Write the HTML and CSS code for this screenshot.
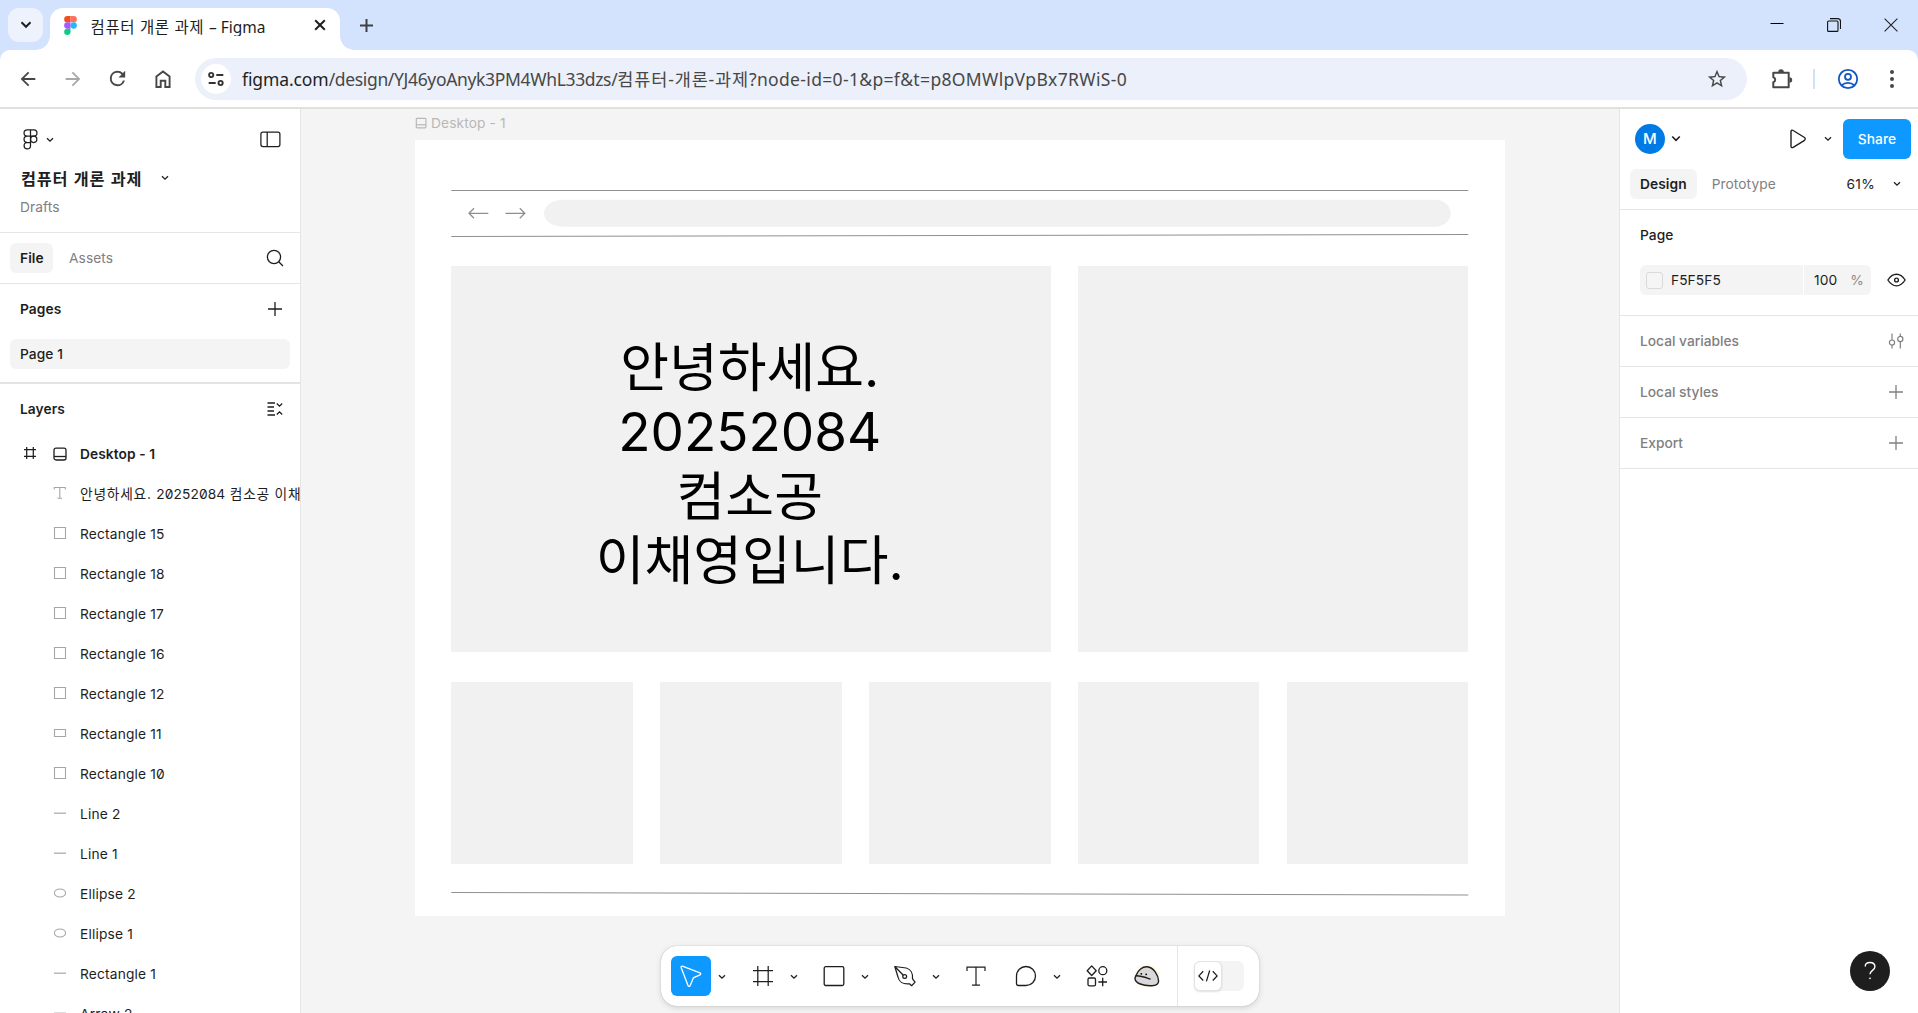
FILE: index.html
```html
<!DOCTYPE html>
<html lang="ko">
<head>
<meta charset="utf-8">
<title>컴퓨터 개론 과제 – Figma</title>
<link rel="stylesheet" href="styles.css">
</head>
<body>
<svg class="defs" width="0" height="0">
  <symbol id="chev" viewBox="0 0 8 6"><path d="M1 1.2 4 4.2 7 1.2" fill="none" stroke="currentColor" stroke-width="1.3"/></symbol>
  <symbol id="plus" viewBox="0 0 14 14"><path d="M7 0v14M0 7h14" fill="none" stroke="currentColor" stroke-width="1.3"/></symbol>
  <symbol id="rect" viewBox="0 0 16 16"><path d="M2.5 2.5h11v11h-11z" fill="none" stroke="currentColor" stroke-width="1.1"/></symbol>
  <symbol id="wide" viewBox="0 0 16 16"><path d="M2.5 4.5h11v7h-11z" fill="none" stroke="currentColor" stroke-width="1.1"/></symbol>
  <symbol id="line" viewBox="0 0 16 16"><path d="M2 8.2h12" fill="none" stroke="currentColor" stroke-width="1.2"/></symbol>
  <symbol id="ellipse" viewBox="0 0 16 16"><ellipse cx="8" cy="8" rx="5.6" ry="4" fill="none" stroke="currentColor" stroke-width="1.1"/></symbol>
</svg>

<header class="tabstrip">
  <button class="tab-search"><svg width="12" height="8" viewBox="0 0 12 8"><path d="M1.5 1.3 6 5.8l4.500-4.500" fill="none" stroke="#1f1f1f" stroke-width="2"/></svg></button>
  <div class="tab">
    <svg class="favicon" width="13" height="19" viewBox="0 0 38 57"><path fill="#1abcfe" d="M19 28.500a9.500 9.500 0 1 1 19 0 9.500 9.500 0 0 1-19 0z"/><path fill="#0acf83" d="M0 47.500A9.500 9.500 0 0 1 9.500 38H19v9.500a9.500 9.500 0 1 1-19 0z"/><path fill="#ff7262" d="M19 0v19h9.500a9.500 9.500 0 1 0 0-19H19z"/><path fill="#f24e1e" d="M0 9.500A9.500 9.500 0 0 0 9.500 19H19V0H9.500A9.500 9.500 0 0 0 0 9.500z"/><path fill="#a259ff" d="M0 28.500A9.500 9.500 0 0 0 9.500 38H19V19H9.500A9.500 9.500 0 0 0 0 28.500z"/></svg>
    <span class="tab-title">컴퓨터 개론 과제 <span class="latin">– Figma</span></span>
    <svg class="tab-close" width="12" height="12" viewBox="0 0 12 12"><path d="m1.200 1.200 9.600 9.600m0-9.600-9.600 9.600" stroke="#1f1f1f" stroke-width="2"/></svg>
  </div>
  <svg class="new-tab" width="13" height="13" viewBox="0 0 13 13"><path d="M6.500 0v13M0 6.500h13" stroke="#3c4043" stroke-width="2"/></svg>
  <div class="window-controls">
    <svg width="14" height="14" viewBox="0 0 14 14"><path d="M.5 5.500h13" stroke="#000"/></svg>
    <svg width="14" height="14" viewBox="0 0 14 14" fill="none" stroke="#111" stroke-width="1.100"><rect x=".6" y="3" width="10.400" height="10.400" rx="1"/><path d="M3 .6h7.500a3 3 0 0 1 3 3V11"/></svg>
    <svg width="14" height="14" viewBox="0 0 14 14"><path d="m.6.6 12.800 12.800m0-12.800L.6 13.400" stroke="#222" stroke-width="1.100"/></svg>
  </div>
</header>

<nav class="browser-bar">
  <div class="nav-icons">
    <svg width="22" height="22" viewBox="0 0 24 24" fill="#474747"><path d="M20 11H7.830l5.590-5.590L12 4l-8 8 8 8 1.410-1.410L7.830 13H20z"/></svg>
    <svg width="22" height="22" viewBox="0 0 24 24" fill="#a8a8a8"><path d="m12 4-1.410 1.410L16.170 11H4v2h12.170l-5.580 5.590L12 20l8-8z"/></svg>
    <svg class="reload" width="23" height="23" viewBox="0 0 24 24" fill="#474747"><path d="M17.650 6.350A7.960 7.960 0 0 0 12 4a8 8 0 1 0 7.730 10h-2.080A6 6 0 1 1 12 6c1.660 0 3.140.690 4.220 1.780L13 11h7V4z"/></svg>
    <svg width="22" height="22" viewBox="0 0 22 22" fill="none" stroke="#474747" stroke-width="1.900"><path d="M4.400 19V8.500L11 3.400l6.600 5.100V19h-4.300v-6.300H8.700V19z"/></svg>
  </div>
  <div class="omnibox">
    <span class="site-info"><svg width="18" height="18" viewBox="0 0 18 18" fill="none" stroke="#333" stroke-width="1.900"><circle cx="4.200" cy="5" r="2.100"/><path d="M9.300 5h7M1.700 13h7"/><circle cx="13.600" cy="13" r="2.100"/></svg></span>
    <span class="url"><span class="domain">figma.com</span><span class="path">/design/YJ46yoAnyk3PM4WhL33dzs/</span><span class="hangul">컴퓨터-개론-과제</span><span class="query">?node-id=0-1&amp;p=f&amp;t=p8OMWlpVpBx7RWiS-0</span></span>
    <svg class="star" width="22" height="22" viewBox="0 0 24 24" fill="#474747"><path d="m22 9.240-7.190-.620L12 2 9.190 8.630 2 9.240l5.460 4.730L5.820 21 12 17.270 18.180 21l-1.630-7.030zM12 15.400l-3.760 2.270 1-4.280-3.320-2.880 4.380-.380L12 6.100l1.710 4.040 4.380.380-3.320 2.880 1 4.280z"/></svg>
  </div>
  <svg class="puzzle" width="24" height="24" viewBox="0 0 24 24"><path d="M4.200 5.700h4.600M8.500 5.700h-4.200v4.600a2.600 2.600 0 0 1 0 5v4.900h15.400V5.700z" fill="none" stroke="#474747" stroke-width="2" stroke-linejoin="round"/><path d="M9.200 5a2.800 2.800 0 0 1 5.600 0zM20.500 10.200a2.700 2.700 0 0 1 0 5.400z" fill="#474747"/></svg>
  <i class="bar-divider"></i>
  <svg class="profile" width="22" height="22" viewBox="0 0 22 22" fill="none" stroke="#1456c4" stroke-width="1.800"><circle cx="11" cy="11" r="9.200"/><circle cx="11" cy="8.800" r="3"/><path d="M4.600 17.300c3.600-3.300 9.200-3.300 12.800 0"/></svg>
  <svg class="menu" width="4" height="18" viewBox="0 0 4 18" fill="#474747"><circle cx="2" cy="2" r="2"/><circle cx="2" cy="9" r="2"/><circle cx="2" cy="16" r="2"/></svg>
</nav>

<main class="workspace">
  <aside class="left">
    <div class="left-head">
      <div class="logo-row">
        <svg width="15" height="21" viewBox="0 0 15 21" fill="none" stroke="#1e1e1e" stroke-width="1.250"><path d="M7.500.9H4.200a3.100 3.100 0 0 0 0 6.300h3.300zM7.500.9h3.300a3.100 3.100 0 0 1 0 6.300H7.500zM7.500 7.200H4.200a3.100 3.100 0 0 0 0 6.300h3.300zM7.500 13.500H4.200a3.200 3.200 0 1 0 3.300 3.200z"/><circle cx="10.700" cy="10.350" r="3.150"/></svg>
        <svg class="c8" width="8" height="6"><use href="#chev"/></svg>
        <svg class="panel-icon" width="21" height="17" viewBox="0 0 21 17" fill="none" stroke="#1e1e1e" stroke-width="1.250"><rect x=".9" y="1.100" width="19" height="14.500" rx="2"/><path d="M7.200 1.100v14.500"/></svg>
      </div>
      <div class="file-row"><span class="file-name">컴퓨터 개론 과제</span><svg width="8" height="6"><use href="#chev"/></svg></div>
      <div class="drafts">Drafts</div>
    </div>
    <div class="tabs-row">
      <span class="pill">File</span><span class="muted">Assets</span>
      <svg class="push" width="18" height="18" viewBox="0 0 18 18" fill="none" stroke="#1e1e1e" stroke-width="1.300"><circle cx="8" cy="8" r="6.600"/><path d="m12.700 12.700 4.300 4.300"/></svg>
    </div>
    <div class="pages">
      <div class="sec-title">Pages<svg width="14" height="14"><use href="#plus"/></svg></div>
      <div class="page-item">Page 1</div>
    </div>
    <div class="sec-title layers-title">Layers<svg width="16" height="14" viewBox="0 0 16 14" fill="none" stroke="#1e1e1e" stroke-width="1.300"><path d="M.5 1h7.500M.5 5h6.500M.5 9h6.500M.5 13h7.500M9.800 1.500l2.700 2.700 2.700-2.700M9.800 12.500l2.700-2.700 2.700 2.700"/></svg></div>
    <ul class="layers">
      <li class="root"><svg class="hash" width="14" height="14" viewBox="0 0 14 14" fill="none" stroke="#1e1e1e" stroke-width="1.250"><path d="M3.700 1v12M10.300 1v12M1 3.700h12M1 10.300h12"/></svg><svg class="ic" width="16" height="16" viewBox="0 0 16 16" fill="none" stroke="#1e1e1e" stroke-width="1.300"><rect x="2" y="2.200" width="12" height="11.800" rx="2"/><path d="M2 10.500h12"/></svg>Desktop - 1</li>
      <li class="text-layer"><svg class="ic" width="16" height="16" viewBox="0 0 16 16" fill="none" stroke="currentColor" stroke-width="1.100"><path d="M2.300 4.600V2.500h11v2.100M7.800 2.500v10.700M5.500 13.200h4.600"/></svg>안녕하세요. <span class="num">20252084</span> 컴소공 이채영입니다.</li>
      <li><svg class="ic"><use href="#rect"/></svg>Rectangle 15</li>
      <li><svg class="ic"><use href="#rect"/></svg>Rectangle 18</li>
      <li><svg class="ic"><use href="#rect"/></svg>Rectangle 17</li>
      <li><svg class="ic"><use href="#rect"/></svg>Rectangle 16</li>
      <li><svg class="ic"><use href="#rect"/></svg>Rectangle 12</li>
      <li><svg class="ic"><use href="#wide"/></svg>Rectangle 11</li>
      <li><svg class="ic"><use href="#rect"/></svg>Rectangle 10</li>
      <li><svg class="ic"><use href="#line"/></svg>Line 2</li>
      <li><svg class="ic"><use href="#line"/></svg>Line 1</li>
      <li><svg class="ic"><use href="#ellipse"/></svg>Ellipse 2</li>
      <li><svg class="ic"><use href="#ellipse"/></svg>Ellipse 1</li>
      <li><svg class="ic"><use href="#line"/></svg>Rectangle 1</li>
      <li><svg class="ic"><use href="#line"/></svg>Arrow 2</li>
    </ul>
  </aside>

  <section class="canvas">
    <div class="frame-label"><svg width="12" height="12" viewBox="0 0 12 12" fill="none" stroke="currentColor" stroke-width="1.200"><rect x="1.300" y="1.300" width="9.600" height="9.600" rx=".8"/><path d="M1.300 7.800h9.600"/></svg>Desktop - 1</div>
    <div class="frame">
      <svg class="mock-nav" width="1018" height="50" viewBox="0 0 1018 50" fill="none" stroke="#8f8f8f">
        <path d="M.3 2.500h1017"/>
        <path d="M.3 48.500 1017.300 46.500"/>
        <path d="M37.300 25.300H18M23 20.300l-5 5 5 5M54.500 25.300h19.300M68.800 20.300l5 5-5 5" stroke-width="1.300"/>
        <path d="M115 11.700h869c10 0 15.700 7 15.700 13.500s-5.700 13.500-15.700 13.500H113c-13 0-20-7-20-13.500s7-13.500 20-13.500z" fill="#f1f1f1" stroke="none"/>
      </svg>
      <div class="tiles">
        <div class="tile hero">안녕하세요.<br>20252084<br>컴소공<br>이채영입니다.</div>
        <div class="tile side"></div>
        <div class="tile"></div><div class="tile"></div><div class="tile"></div><div class="tile"></div><div class="tile"></div>
      </div>
      <svg class="foot-line" width="1018" height="4" viewBox="0 0 1018 4"><path d="M.3 .500 1017.300 3" stroke="#8f8f8f"/></svg>
    </div>

    <div class="toolbar">
      <span class="tool active"><svg width="24" height="28" viewBox="0 0 24 28" fill="none" stroke="#fff" stroke-width="1.300" stroke-linejoin="round"><path d="M3.400 4.200 21 10.800c1 .4 1 1.700 0 2.100l-6.700 3-3.200 7.800c-.4 1-1.800.9-2.100-.1L2.100 5.500c-.3-.9.500-1.600 1.300-1.300z"/></svg></span><svg class="tc"><use href="#chev"/></svg>
      <span class="tool"><svg width="22" height="22" viewBox="0 0 22 22" fill="none" stroke="#1e1e1e" stroke-width="1.250"><path d="M5.800 1v20M16.200 1v20M1 5.500h20M1 16.500h20"/></svg></span><svg class="tc"><use href="#chev"/></svg>
      <span class="tool"><svg width="22" height="22" viewBox="0 0 22 22" fill="none" stroke="#1e1e1e" stroke-width="1.300"><rect x="1.200" y="1.700" width="19.600" height="18.800" rx="1.500"/></svg></span><svg class="tc"><use href="#chev"/></svg>
      <span class="tool"><svg width="24" height="24" viewBox="0 0 24 24" fill="none" stroke="#1e1e1e" stroke-width="1.250" stroke-linejoin="round"><path d="M1.800 2.500 13.200 4c4 1 6.800 5 6.300 10.800l2.600 3.300-3.500 3.600-2.100-1.900c-7 .8-10.700-2.700-11.500-6.800zM1.800 2.500l8.500 8.700"/><circle cx="11.700" cy="12.500" r="1.900"/></svg></span><svg class="tc"><use href="#chev"/></svg>
      <span class="tool type"><svg width="22" height="22" viewBox="0 0 22 22" fill="none" stroke="#1e1e1e" stroke-width="1.200"><path d="M2 6V2.200h18V6M11 2.200v18M7 20.200h8"/></svg></span>
      <span class="tool comment"><svg width="22" height="22" viewBox="0 0 22 22" fill="none" stroke="#1e1e1e" stroke-width="1.300"><path d="M11 1.500a9.500 9.500 0 0 1 0 19H3.500c-1.200 0-2-.8-2-2V11A9.500 9.500 0 0 1 11 1.500z"/></svg></span><svg class="tc"><use href="#chev"/></svg>
      <span class="tool"><svg width="22" height="22" viewBox="0 0 22 22" fill="none" stroke="#1e1e1e" stroke-width="1.300" stroke-linejoin="round"><path d="m5.700.9 4.500 4.800-4.500 4.800-4.500-4.800zM16.700 12.700v8.600M12.400 17h8.600"/><circle cx="16.800" cy="5.700" r="4"/><rect x="2" y="13" width="7.500" height="7.800" rx="1.400"/></svg></span>
      <span class="tool rock"><svg width="30" height="30" viewBox="0 0 30 30"><path d="M4 14.500C6 9 10.500 5.600 15 5.800 22 6.300 26.500 15 26.600 20c0 3.700-3.300 4.600-7 4.700C12 25 2.500 22.500 3 17z" fill="#d9d9d9" stroke="#1e1e1e" stroke-width="1.400"/><path d="M4 14.800c4.500-.2 9 1.500 14 3.200" fill="none" stroke="#1e1e1e" stroke-width="1.400" stroke-linecap="round"/><circle cx="9.300" cy="12.800" r=".9"/><circle cx="14.200" cy="13.300" r=".9"/></svg></span>
      <i class="tool-divider"></i>
      <span class="dev-toggle"><span class="knob"><svg width="20" height="14" viewBox="0 0 20 14" fill="none" stroke="#1e1e1e" stroke-width="1.250"><path d="M5.200 2.300.9 6.900l4.300 4.600M14.800 2.300l4.300 4.600-4.300 4.600M11.700 1.500 8.400 12.400"/></svg></span></span>
    </div>
  </section>

  <aside class="right">
    <div class="right-head">
      <div class="share-row">
        <span class="avatar">M</span><svg class="chev-lg"><use href="#chev"/></svg>
        <svg class="play" width="16" height="20" viewBox="0 0 16 20" fill="none" stroke="#1e1e1e" stroke-width="1.400" stroke-linejoin="round"><path d="M1 2.500C1 1.200 2.300.8 3.200 1.500l11.300 7c.9.700.9 2.100 0 2.800l-11.300 7C2.300 19 1 18.600 1 17.500z"/></svg>
        <svg class="play-chev" width="8" height="6"><use href="#chev"/></svg>
        <button class="share">Share</button>
      </div>
      <div class="mode-row"><span class="pill">Design</span><span class="muted">Prototype</span><span class="zoom">61%</span><svg width="8" height="6"><use href="#chev"/></svg></div>
    </div>
    <div class="page-props">
      <div class="prop-title">Page</div>
      <div class="fill-row">
        <span class="hex"><i class="swatch"></i>F5F5F5</span><span class="alpha">100<em>%</em></span>
        <svg width="19" height="14" viewBox="0 0 19 14" fill="none" stroke="#1e1e1e" stroke-width="1.350"><path d="M.9 7C3.500 2.800 6.300 1.200 9.500 1.200S15.500 2.800 18.100 7c-2.600 4.200-5.400 5.800-8.600 5.800S3.500 11.200.9 7z"/><circle cx="9.500" cy="7" r="1.900"/></svg>
      </div>
    </div>
    <div class="prop-row">Local variables<svg class="sliders" width="16" height="16" viewBox="0 0 16 16" fill="none" stroke="currentColor" stroke-width="1.200"><path d="M4 .5v6.300M4 12.300v3.200M12.300.5v2.700M12.300 8.700v6.800"/><circle cx="4" cy="9.600" r="2.600"/><circle cx="12.300" cy="6" r="2.600"/></svg></div>
    <div class="prop-row">Local styles<svg class="p" width="14" height="14"><use href="#plus"/></svg></div>
    <div class="prop-row">Export<svg class="p" width="14" height="14"><use href="#plus"/></svg></div>
    <button class="help"><svg width="14" height="20" viewBox="0 0 14 20" fill="none" stroke="#fff" stroke-width="1.400"><path d="M2.200 5.500C2.200 3 4.200 1.500 7 1.500s4.900 1.700 4.900 4.200c0 3.600-4.900 3.700-4.900 7.600"/><circle cx="7" cy="17.300" r=".6" fill="#fff" stroke-width=".6"/></svg></button>
  </aside>
</main>
</body>
</html>
```
FILE: styles.css
```css
* { box-sizing: border-box; }
html { background: #d3e2fd; }
body {
  margin: 0;
  width: 1918px;
  height: 1013px;
  overflow: hidden;
  display: flex;
  flex-direction: column;
  font: 13.75px/20px Inter, "Noto Sans CJK KR", sans-serif;
  letter-spacing: 0.07px;
  color: #1e1e1e;
}
svg { display: block; flex: none; }
.defs { position: absolute; }
button { border: 0; padding: 0; font: inherit; letter-spacing: inherit; }

/* Browser chrome */
.tabstrip {
  flex: none;
  height: 50px;
  display: flex;
  align-items: flex-start;
  padding: 8px 20px 0 8px;
  background: #d3e2fd;
}
.tab-search {
  width: 35px;
  height: 34px;
  border-radius: 11px;
  background: #edf2fd;
  display: grid;
  place-items: center;
}
.tab {
  position: relative;
  width: 290px;
  height: 42px;
  margin-left: 7px;
  padding: 0 14px 8px 14px;
  display: flex;
  align-items: center;
  border-radius: 13px 13px 0 0;
  background: #fff;
}
.tab::before, .tab::after {
  content: "";
  position: absolute;
  bottom: 0;
  width: 14px;
  height: 14px;
}
.tab::before { left: -14px; background: radial-gradient(circle at 0 0, transparent 13.5px, #fff 14px); }
.tab::after { right: -14px; background: radial-gradient(circle at 100% 0, transparent 13.5px, #fff 14px); }
.tab-title {
  margin-left: 13.5px;
  height: 21px;
  margin-top: 1px;
  overflow: hidden;
  white-space: nowrap;
  font: 15.5px/24px "Noto Sans", "Noto Sans CJK KR", sans-serif;
  letter-spacing: 0.65px;
}
.tab-title .latin { letter-spacing: 0; }
.tab-close { margin-left: auto; }
.new-tab { margin: 11px 0 0 20px; }
.window-controls { margin: 10px 0 0 auto; display: flex; gap: 43px; }
.browser-bar {
  flex: none;
  height: 59px;
  display: flex;
  align-items: center;
  padding: 0 24px 0 17px;
  border-bottom: 2px solid #e1e0dd;
  background: #fff;
  border-radius: 10px 10px 0 0;
}
.nav-icons { display: flex; align-items: center; gap: 23px; width: 178px; }
.reload { margin: 0 -0.5px 0 -1px; }
.omnibox {
  width: 1552px;
  height: 42px;
  padding: 0 19px 0 6px;
  display: flex;
  align-items: center;
  border-radius: 21px;
  background: #ebf0fa;
}
.site-info { width: 30px; height: 30px; border-radius: 50%; background: #fff; display: grid; place-items: center; }
.url {
  margin-left: 11px;
  font: 17.5px/26px "Noto Sans", "Noto Sans CJK KR", sans-serif;
  letter-spacing: -0.1px;
  color: #474747;
  white-space: nowrap;
}
.domain { color: #1f1f1f; }
.path { letter-spacing: -0.34px; }
.hangul { letter-spacing: 0.85px; }
.query { letter-spacing: 0.34px; }
.star { margin-left: auto; }
.puzzle { margin-left: 21.5px; }
.bar-divider { width: 2px; height: 20px; margin-left: 20px; background: #cfe0fb; }
.profile { margin-left: 22px; }
.menu { margin-left: auto; }

/* Left panel */
.workspace { flex: 1; min-height: 0; display: flex; background: #fff; }
.left { width: 301px; border-right: 1px solid #e6e6e6; overflow: hidden; }
.left-head { height: 124px; border-bottom: 1px solid #e6e6e6; padding: 20px 20px 0; }
.logo-row { height: 21px; padding-left: 3px; display: flex; align-items: center; }
.c8 { margin-left: 8px; }
.panel-icon { margin: -1px -0.5px 0 auto; }
.file-row { margin-top: 16px; height: 24px; padding-left: 1px; display: flex; align-items: center; gap: 18px; }
.file-name { font: 700 16.25px/24px "Noto Sans CJK KR", sans-serif; letter-spacing: 0.85px; width: 122px; white-space: nowrap; }
.drafts { margin-top: 7px; height: 20px; color: #808080; }
.tabs-row { height: 51px; border-bottom: 1px solid #e6e6e6; display: flex; align-items: center; padding: 0 16.5px 0 10px; }
.pill { height: 30px; line-height: 30px; padding: 0 10px; border-radius: 6px; background: #f4f4f4; font-weight: 600; color: #1e1e1e; }
.tabs-row .pill { width: 43px; }
.muted { margin-left: 16px; color: #808080; }
.push { margin-left: auto; }
.pages { height: 100px; border-bottom: 2px solid #e4e4e4; padding: 15px 10px 0; }
.sec-title { display: flex; align-items: center; justify-content: space-between; height: 20px; padding: 0 8.5px 0 10px; font-weight: 600; }
.page-item { margin-top: 20px; height: 30px; line-height: 30px; padding-left: 10px; border-radius: 6px; background: #f4f4f4; font-weight: 500; }
.layers-title { margin-top: 15px; padding: 0 17px 0 20px; }
.layers { list-style: none; margin: 15px 0 0; padding: 0; font-feature-settings: "zero"; letter-spacing: 0.17px; }
.layers li { height: 40px; display: flex; align-items: center; padding-left: 52px; white-space: pre; }
.layers .root { padding-left: 23px; font-weight: 600; letter-spacing: 0.07px; }
.layers .text-layer { letter-spacing: 0.75px; }
.text-layer .num { letter-spacing: 0.07px; }
.ic { width: 16px; height: 16px; margin-right: 12px; color: #a6a6a6; position: relative; top: -1px; }
.root .ic { color: #1e1e1e; top: 0; }
.hash { margin-right: 15px; position: relative; top: -1px; }

/* Canvas */
.canvas { position: relative; flex: 1; background: #f4f4f4; }
.frame-label { height: 20px; margin: 4px 0 0 114px; display: flex; align-items: center; gap: 4px; color: #b8b8b8; letter-spacing: 0.12px; }
.frame { margin: 7px 0 0 114px; width: 1090px; height: 775.5px; padding: 48px 36px 0 36px; background: #fff; }
.tiles {
  width: 1017.4px;
  margin-top: 28px;
  display: grid;
  grid-template-columns: repeat(5, 1fr);
  grid-template-rows: 386px 182px;
  gap: 30px 27.3px;
}
.tile { background: #f1f1f1; }
.hero {
  grid-column: span 3;
  padding: 70px 2px 0 0;
  text-align: center;
  font: 53px/64.4px Inter, "Noto Sans CJK KR", sans-serif;
  letter-spacing: 0;
  color: #000;
}
.side { grid-column: span 2; }
.foot-line { margin-top: 28px; }

.toolbar {
  position: absolute;
  left: 360px;
  top: 837px;
  width: 598px;
  height: 60px;
  padding-left: 10px;
  display: flex;
  align-items: center;
  border-radius: 16px;
  background: #fff;
  box-shadow: 0 0 1px rgba(0,0,0,.35), 0 2px 6px rgba(0,0,0,.13);
}
.tool { width: 40px; height: 40px; border-radius: 6px; display: grid; place-items: center; }
.active { background: #0d99ff; }
.tc { width: 8px; height: 6px; margin: 2px 16.25px 0 7px; }
.active + .tc { margin-right: 16.75px; }
.type { margin: 0 0.5px 0 -1px; }
.comment { margin-left: 10px; }
.rock { margin-left: 10px; background: radial-gradient(circle, #fff0b8 20%, rgba(255,244,200,.7) 32%, transparent 48%); }
.tool-divider { width: 1px; height: 60px; margin-left: 10px; background: #e6e6e6; }
.dev-toggle { margin-left: 16px; width: 50px; height: 30px; border-radius: 6px; background: #f4f4f4; }
.knob { width: 28px; height: 30px; border-radius: 6px; background: #fff; border: 1px solid #e3e3e3; box-shadow: 0 1px 2px rgba(0,0,0,.12); display: grid; place-items: center; }

/* Right panel */
.right { position: relative; width: 299px; border-left: 1px solid #e6e6e6; }
.right-head { height: 101px; padding: 10px 7px 0 10px; border-bottom: 1px solid #e6e6e6; }
.share-row { height: 40px; display: flex; align-items: center; }
.avatar { margin-left: 5px; width: 30px; height: 30px; border-radius: 50%; background: #007be5; color: #fff; text-align: center; line-height: 30px; font-weight: 500; font-size: 15px; }
.chev-lg { width: 10px; height: 7.5px; margin-left: 6px; }
.play { margin-left: auto; }
.play-chev { margin: 0 11px 0 18px; }
.share { width: 68px; height: 40px; border-radius: 6px; background: #0d99ff; color: #fff; font-weight: 500; }
.mode-row { margin-top: 10px; height: 30px; display: flex; align-items: center; padding-right: 10px; }
.mode-row .muted { margin-left: 15px; }
.zoom { margin: 0 18px 0 auto; letter-spacing: 0.3px; }
.page-props { height: 106px; border-bottom: 1px solid #e6e6e6; padding: 15px 12px 0 20px; }
.prop-title { font-weight: 500; }
.fill-row { margin-top: 20px; height: 30px; display: flex; align-items: center; }
.hex, .alpha { height: 30px; display: flex; align-items: center; background: #f4f4f4; }
.hex { width: 163px; padding-left: 6px; border-radius: 6px 0 0 6px; }
.swatch { width: 17px; height: 17px; margin-right: 8px; border: 1px solid #dadada; border-radius: 3px; background: #f5f5f5; }
.alpha { width: 67px; margin-left: 1px; padding-left: 10px; border-radius: 0 6px 6px 0; }
.alpha em { font-style: normal; color: #8c8c8c; margin-left: 13px; }
.fill-row svg { margin-left: auto; margin-right: 0.5px; }
.prop-row { height: 51px; padding: 0 13px 0 20px; border-bottom: 1px solid #e6e6e6; display: flex; align-items: center; justify-content: space-between; font-weight: 500; color: #808080; letter-spacing: 0; }
.prop-row .p { margin-right: 2.5px; }
.sliders { margin-right: 1.5px; }
.help { position: absolute; right: 28px; bottom: 22px; width: 40px; height: 40px; border-radius: 50%; background: #1e1e1e; display: grid; place-items: center; }
```
